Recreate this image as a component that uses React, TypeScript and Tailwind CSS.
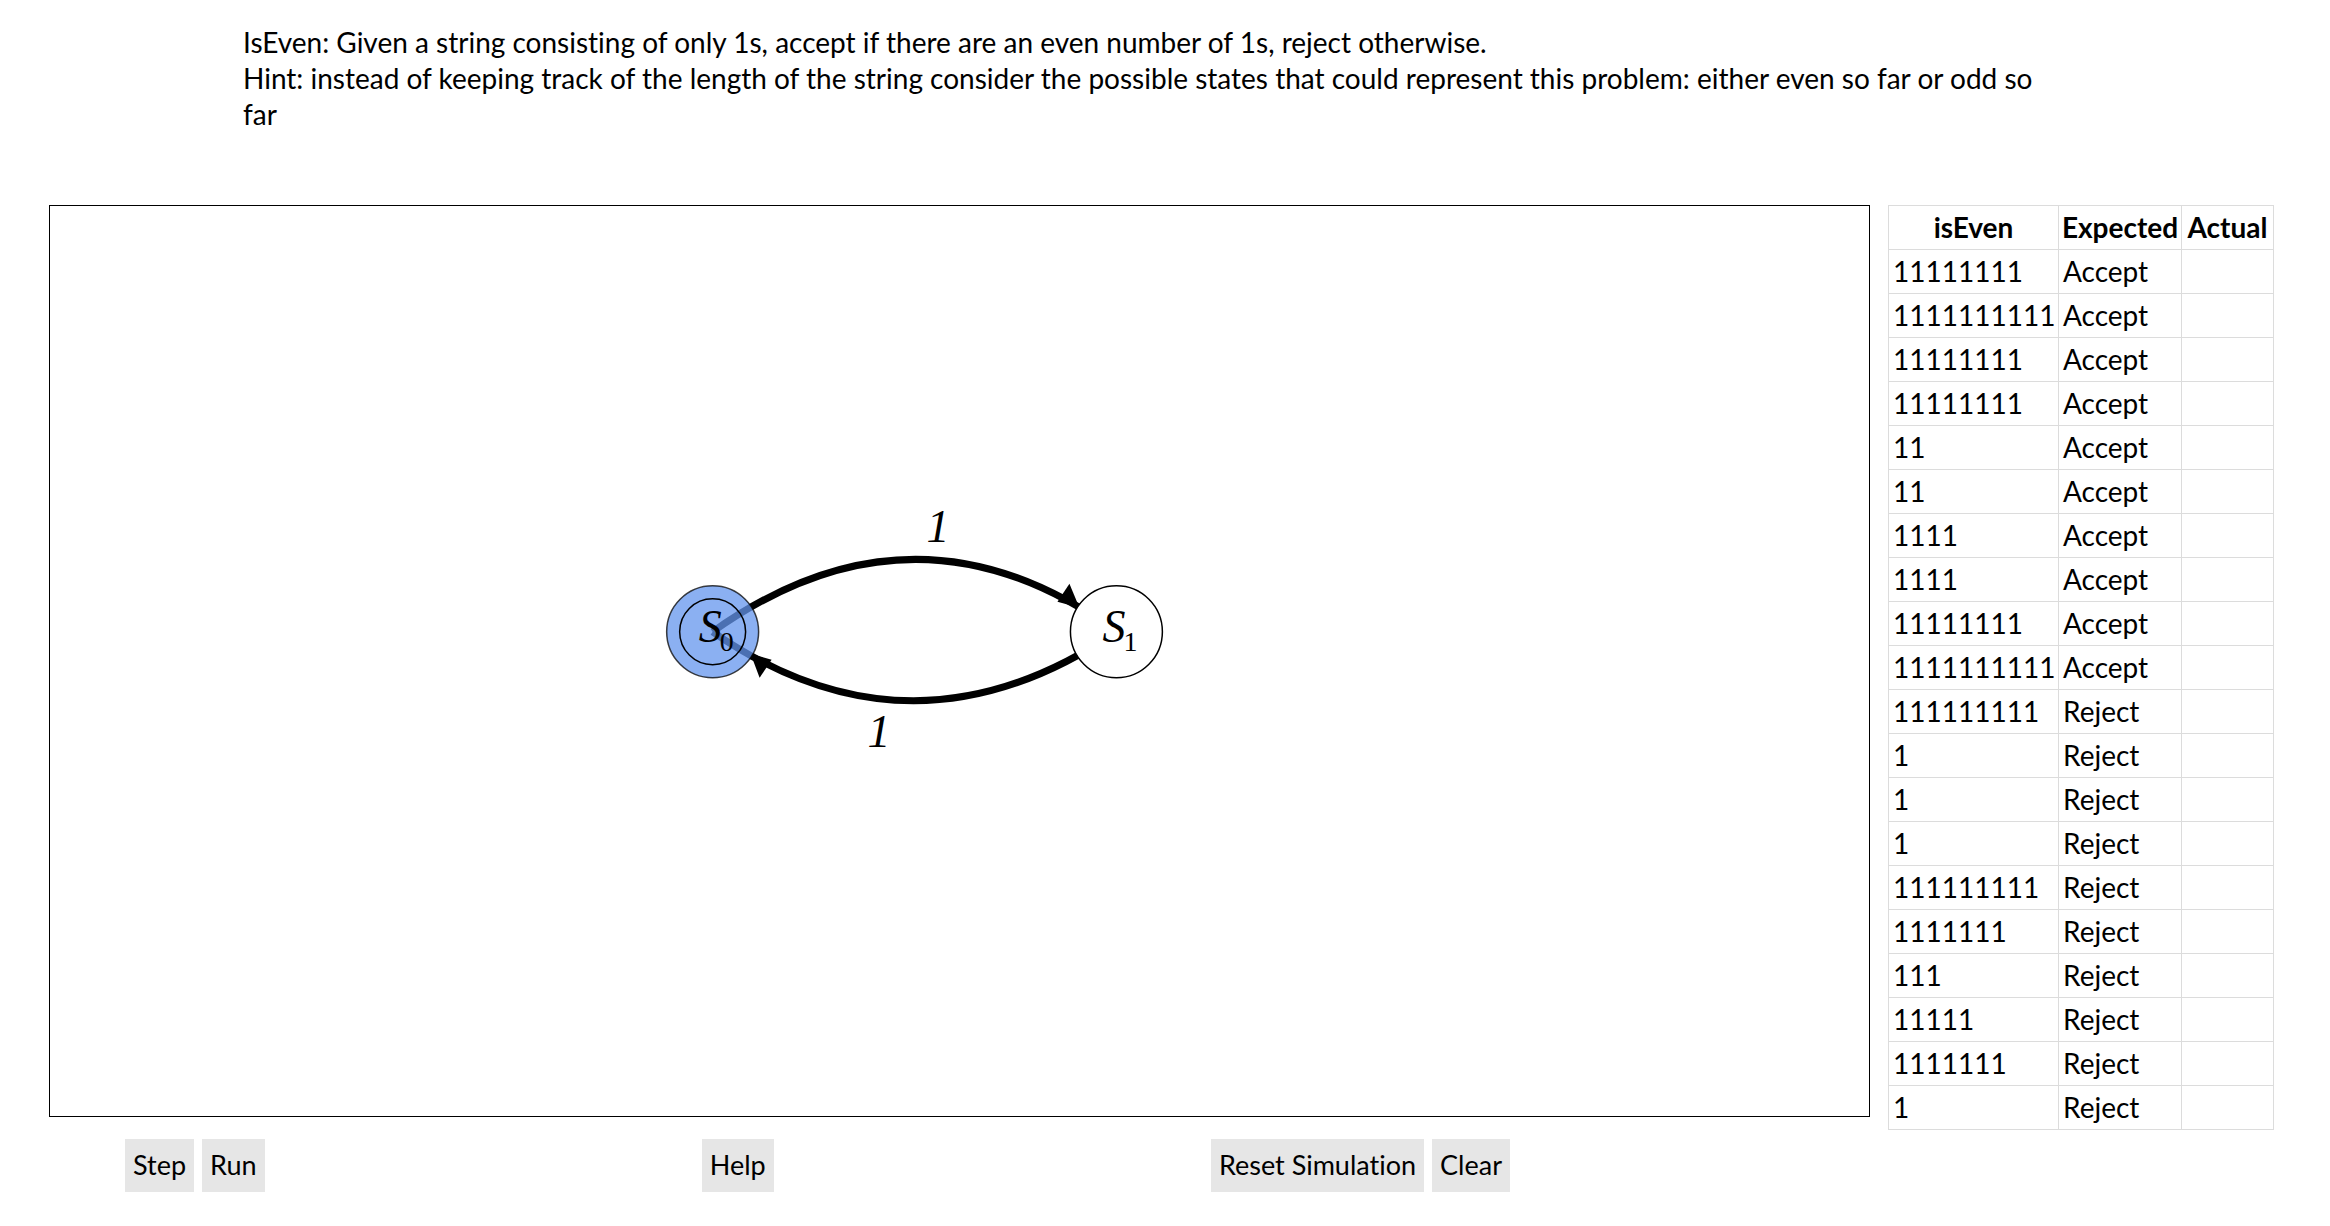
import React from "react";

type Verdict = "Accept" | "Reject";

const tests: { input: string; expected: Verdict }[] = [
  { input: "11111111", expected: "Accept" },
  { input: "1111111111", expected: "Accept" },
  { input: "11111111", expected: "Accept" },
  { input: "11111111", expected: "Accept" },
  { input: "11", expected: "Accept" },
  { input: "11", expected: "Accept" },
  { input: "1111", expected: "Accept" },
  { input: "1111", expected: "Accept" },
  { input: "11111111", expected: "Accept" },
  { input: "1111111111", expected: "Accept" },
  { input: "111111111", expected: "Reject" },
  { input: "1", expected: "Reject" },
  { input: "1", expected: "Reject" },
  { input: "1", expected: "Reject" },
  { input: "111111111", expected: "Reject" },
  { input: "1111111", expected: "Reject" },
  { input: "111", expected: "Reject" },
  { input: "11111", expected: "Reject" },
  { input: "1111111", expected: "Reject" },
  { input: "1", expected: "Reject" },
];

function SimButton({ children }: { children: React.ReactNode }) {
  return (
    <button type="button" className="h-[53px] bg-[#e6e6e6] px-2 text-[27px] whitespace-nowrap">
      {children}
    </button>
  );
}

function Automaton() {
  return (
    <svg
      viewBox="0 0 1820 910"
      role="img"
      aria-label="State diagram"
      className="block h-auto w-full font-['Liberation_Serif',serif]"
    >
      <g fill="none" stroke="black" strokeWidth="7">
        <path d="M663 426 Q867 281 1067 426" />
        <path d="M1067 426 Q863 564 663 426" />
      </g>
      <path d="M1020 378 L1008 396 L1030 402 Z" />
      <path d="M701 448 L722 454 L710 472 Z" />

      <circle cx="663" cy="426" r="46" fill="cornflowerblue" fillOpacity="0.75" stroke="black" strokeWidth="1.5" strokeOpacity="0.75" />
      <circle cx="663" cy="426" r="33" fill="none" stroke="black" strokeWidth="1.5" />
      <circle cx="1067" cy="426" r="46" fill="white" stroke="black" strokeWidth="1.5" />

      <g fontSize="46" fontStyle="italic">
        <text x="649" y="436">S</text>
        <text x="1053" y="436">S</text>
        <text x="877" y="336">1</text>
        <text x="818" y="541">1</text>
      </g>
      <g fontSize="28">
        <text x="670" y="445">0</text>
        <text x="1074" y="445">1</text>
      </g>
    </svg>
  );
}

export default function App() {
  return (
    <div className="bg-white pt-6 pb-8 font-[Lato,'Noto_Sans',sans-serif] text-[28px] leading-9 text-black [font-variant-ligatures:none]">
      <header className="mx-auto mb-[73px] w-4/5 pr-8 pl-[10px]">
        <p>IsEven: Given a string consisting of only 1s, accept if there are an even number of 1s, reject otherwise.</p>
        <p>
          Hint: instead of keeping track of the length of the string consider the possible states that could represent
          this problem: either even so far or odd so far
        </p>
      </header>

      <main className="flex items-start gap-[18px] pr-14 pl-[49px]">
        <section className="min-w-0 flex-1">
          <div className="border border-black">
            <Automaton />
          </div>
          <div className="mt-[22px] flex items-center justify-between pr-[360px] pl-[76px]">
            <div className="flex gap-2">
              <SimButton>Step</SimButton>
              <SimButton>Run</SimButton>
            </div>
            <SimButton>Help</SimButton>
            <div className="flex gap-2">
              <SimButton>Reset Simulation</SimButton>
              <SimButton>Clear</SimButton>
            </div>
          </div>
        </section>

        <table className="w-[385px] shrink-0 table-fixed border-collapse">
          <colgroup>
            <col className="w-[170px]" />
            <col className="w-[123px]" />
            <col className="w-[92px]" />
          </colgroup>
          <thead>
            <tr className="h-11">
              <th className="border border-[#dcdcdc] pb-0.5 font-bold">isEven</th>
              <th className="border border-[#dcdcdc] pb-0.5 font-bold">Expected</th>
              <th className="border border-[#dcdcdc] pb-0.5 font-bold">Actual</th>
            </tr>
          </thead>
          <tbody>
            {tests.map((t, i) => (
              <tr key={i} className="h-11">
                <td className="border border-[#dcdcdc] px-1 pb-0.5">{t.input}</td>
                <td className="border border-[#dcdcdc] px-1 pb-0.5">{t.expected}</td>
                <td className="border border-[#dcdcdc] px-1 pb-0.5" />
              </tr>
            ))}
          </tbody>
        </table>
      </main>
    </div>
  );
}
